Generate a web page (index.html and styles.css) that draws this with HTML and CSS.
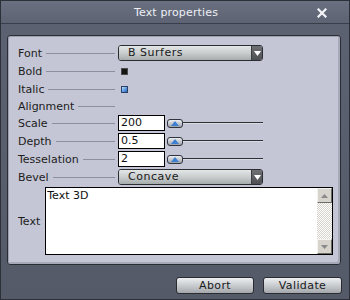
FILE: index.html
```html
<!DOCTYPE html>
<html>
<head>
<meta charset="utf-8">
<link rel="stylesheet" href="styles.css">
</head>
<body>
<div class="window">
  <div class="titlebar">
    <span class="title">Text properties</span>
    <svg class="close" width="10" height="10" viewBox="0 0 10 10"><path d="M1.5 1.5 L8.5 8.5 M8.5 1.5 L1.5 8.5" stroke="#f4f4f8" stroke-width="2.2" stroke-linecap="square"/></svg>
  </div>
  <div class="body">
    <div class="panel">
      <div class="row">
        <div class="cap"><span class="label">Font</span><span class="leader"></span></div>
        <div class="select"><span class="sel-text">B Surfers</span><span class="sel-arrow"><svg width="7" height="5" viewBox="0 0 7 5"><path d="M0 0 H7 L3.5 5 Z" fill="#fff"/></svg></span></div>
      </div>
      <div class="row">
        <div class="cap"><span class="label">Bold</span><span class="leader"></span></div>
        <span class="check check-black"></span>
      </div>
      <div class="row">
        <div class="cap"><span class="label">Italic</span><span class="leader"></span></div>
        <span class="check check-blue"></span>
      </div>
      <div class="row row-short">
        <div class="cap"><span class="label">Alignment</span><span class="leader"></span></div>
      </div>
      <div class="row">
        <div class="cap"><span class="label">Scale</span><span class="leader"></span></div>
        <span class="input">200</span>
        <span class="slider"><span class="knob"><svg width="8" height="5" viewBox="0 0 8 5"><path d="M4 0 L8 5 H0 Z" fill="#3d7fd0"/></svg></span><span class="track"></span></span>
      </div>
      <div class="row">
        <div class="cap"><span class="label">Depth</span><span class="leader"></span></div>
        <span class="input">0.5</span>
        <span class="slider"><span class="knob"><svg width="8" height="5" viewBox="0 0 8 5"><path d="M4 0 L8 5 H0 Z" fill="#3d7fd0"/></svg></span><span class="track"></span></span>
      </div>
      <div class="row">
        <div class="cap"><span class="label">Tesselation</span><span class="leader"></span></div>
        <span class="input">2</span>
        <span class="slider"><span class="knob"><svg width="8" height="5" viewBox="0 0 8 5"><path d="M4 0 L8 5 H0 Z" fill="#3d7fd0"/></svg></span><span class="track"></span></span>
      </div>
      <div class="row">
        <div class="cap"><span class="label">Bevel</span><span class="leader"></span></div>
        <div class="select"><span class="sel-text">Concave</span><span class="sel-arrow"><svg width="7" height="5" viewBox="0 0 7 5"><path d="M0 0 H7 L3.5 5 Z" fill="#fff"/></svg></span></div>
      </div>
      <div class="text-row">
        <span class="label text-label">Text</span>
        <div class="textbox">
          <div class="text-content">Text 3D</div>
          <div class="scrollbar">
            <span class="sb-btn"><svg width="7" height="4" viewBox="0 0 7 4"><path d="M3.5 0 L7 4 H0 Z" fill="#8a8a8a"/></svg></span>
            <span class="sb-track"></span>
            <span class="sb-btn"><svg width="7" height="4" viewBox="0 0 7 4"><path d="M0 0 H7 L3.5 4 Z" fill="#8a8a8a"/></svg></span>
          </div>
        </div>
      </div>
    </div>
    <div class="buttons">
      <button class="btn btn-abort">Abort</button>
      <button class="btn btn-validate">Validate</button>
    </div>
  </div>
</div>
</body>
</html>
```

FILE: styles.css
```css
* { box-sizing: border-box; }
html, body { margin: 0; padding: 0; }
body {
  width: 350px;
  height: 300px;
  font-family: "DejaVu Sans", Verdana, sans-serif;
  font-size: 11px;
  color: #1c1c1c;
}
.window {
  width: 350px;
  height: 300px;
  border: 1px solid #2c3039;
  background: linear-gradient(#5c6271, #555a69);
  display: flex;
  flex-direction: column;
}
.titlebar {
  height: 23px;
  flex: none;
  border-bottom: 1px solid #3a3e4a;
  background: linear-gradient(#6a7080, #5d6373);
  display: flex;
  align-items: center;
  justify-content: center;
  position: relative;
}
.title {
  color: #eef0f6;
  font-size: 11px;
  letter-spacing: 0.15px;
  padding-left: 2px;
}
.close {
  position: absolute;
  right: 22px;
  top: 7px;
}
.body {
  flex: 1;
  padding: 11px 7px 0 6px;
  display: flex;
  flex-direction: column;
}
.panel {
  width: 334px;
  height: 230px;
  background: #c4c6d5;
  border: 1px solid #2a2d36;
  border-radius: 3px;
  box-shadow: inset 1px 1px 0 #9da0ae, inset -2px -2px 0 #a6a9b7;
  padding: 8px 7px 8px 10px;
  display: flex;
  flex-direction: column;
}
.row {
  height: 18px;
  display: flex;
  align-items: center;
}
.row-short { height: 16px; }
.cap {
  width: 100px;
  flex: none;
  display: flex;
  align-items: center;
}
.label {
  flex: none;
  line-height: 13px;
}
.leader {
  flex: 1;
  height: 1px;
  background: #8c8fa0;
  margin: 1px 3px 0 4px;
}
.select {
  flex: none;
  width: 145px;
  height: 16px;
  border: 1px solid #2b2d33;
  border-radius: 3px;
  display: flex;
  overflow: hidden;
}
.sel-text {
  flex: 1;
  background: linear-gradient(#e4e7e7, #c6caca 55%, #a6abab);
  padding-left: 9px;
  letter-spacing: 0.5px;
  line-height: 14px;
  color: #1a1a1a;
}
.sel-arrow {
  width: 11px;
  flex: none;
  border-left: 1px solid #3a3c40;
  background: linear-gradient(#6e7073, #4e5053);
  display: flex;
  align-items: center;
  justify-content: center;
}
.check {
  flex: none;
  width: 7px;
  height: 7px;
  margin-left: 3px;
}
.check-black {
  background: #141414;
  border: 1px solid #4a4a4a;
}
.check-blue {
  border: 1px solid #2b3f66;
  background: linear-gradient(135deg, #c4e0fa, #5a9ae0 55%, #2a62b0);
}
.input {
  flex: none;
  width: 47px;
  height: 16px;
  background: #fff;
  border: 1px solid #000;
  padding-left: 2px;
  line-height: 14px;
  color: #111;
}
.slider {
  display: flex;
  align-items: center;
  margin-left: 2px;
}
.knob {
  width: 16px;
  height: 9px;
  border: 1px solid #30343c;
  border-radius: 3px;
  background: linear-gradient(#eceff2, #9da2aa);
  display: flex;
  align-items: center;
  justify-content: center;
}
.track {
  width: 80px;
  height: 2px;
  border-top: 1px solid #2e3038;
  border-bottom: 1px solid #d8dae4;
}
.text-row {
  margin-top: 1px;
  height: 68px;
  display: flex;
  align-items: center;
}
.text-label { margin-right: 5px; }
.textbox {
  flex: 1;
  height: 68px;
  border: 1px solid #000;
  background: #fff;
  display: flex;
}
.text-content {
  flex: 1;
  padding: 1px 1px;
  line-height: 13px;
  color: #111;
}
.scrollbar {
  width: 15px;
  display: flex;
  flex-direction: column;
}
.sb-btn {
  height: 15px;
  flex: none;
  background: #d6d4cc;
  border: 1px solid;
  border-color: #f4f4f0 #6c6c68 #6c6c68 #f4f4f0;
  display: flex;
  align-items: center;
  justify-content: center;
}
.sb-track {
  flex: 1;
  background: repeating-conic-gradient(#d6d4cc 0 25%, #ffffff 0 50%) 0 0 / 2px 2px;
}
.buttons {
  margin-top: 12px;
  display: flex;
  justify-content: flex-end;
  gap: 9px;
}
.btn {
  height: 17px;
  border: 1px solid #2a2c32;
  border-radius: 3px;
  background: linear-gradient(#eceef0, #c9cccf 50%, #a3a7ab);
  font-family: "DejaVu Sans", Verdana, sans-serif;
  font-size: 11px;
  letter-spacing: 0.4px;
  color: #1a1a1a;
  padding: 0;
  line-height: 15px;
}
.btn-abort { width: 78px; }
.btn-validate { width: 79px; }
```
